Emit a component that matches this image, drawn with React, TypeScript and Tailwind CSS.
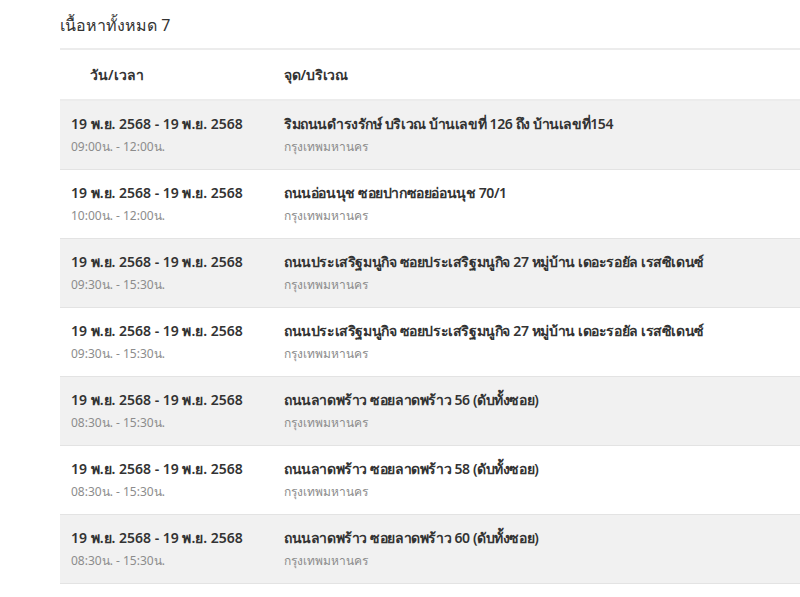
const rows = [
  {
    date: '19 พ.ย. 2568 - 19 พ.ย. 2568',
    time: '09:00น. - 12:00น.',
    place: 'ริมถนนดำรงรักษ์ บริเวณ บ้านเลขที่ 126 ถึง บ้านเลขที่154',
  },
  {
    date: '19 พ.ย. 2568 - 19 พ.ย. 2568',
    time: '10:00น. - 12:00น.',
    place: 'ถนนอ่อนนุช ซอยปากซอยอ่อนนุช 70/1',
  },
  {
    date: '19 พ.ย. 2568 - 19 พ.ย. 2568',
    time: '09:30น. - 15:30น.',
    place: 'ถนนประเสริฐมนูกิจ ซอยประเสริฐมนูกิจ 27 หมู่บ้าน เดอะรอยัล เรสซิเดนซ์',
  },
  {
    date: '19 พ.ย. 2568 - 19 พ.ย. 2568',
    time: '09:30น. - 15:30น.',
    place: 'ถนนประเสริฐมนูกิจ ซอยประเสริฐมนูกิจ 27 หมู่บ้าน เดอะรอยัล เรสซิเดนซ์',
  },
  {
    date: '19 พ.ย. 2568 - 19 พ.ย. 2568',
    time: '08:30น. - 15:30น.',
    place: 'ถนนลาดพร้าว ซอยลาดพร้าว 56 (ดับทั้งซอย)',
  },
  {
    date: '19 พ.ย. 2568 - 19 พ.ย. 2568',
    time: '08:30น. - 15:30น.',
    place: 'ถนนลาดพร้าว ซอยลาดพร้าว 58 (ดับทั้งซอย)',
  },
  {
    date: '19 พ.ย. 2568 - 19 พ.ย. 2568',
    time: '08:30น. - 15:30น.',
    place: 'ถนนลาดพร้าว ซอยลาดพร้าว 60 (ดับทั้งซอย)',
  },
];

export default function App() {
  return (
    <div className="min-h-[597px] bg-white pl-[60px] font-['Noto_Sans',sans-serif] text-[#333]">
      <h2 className="h-[48px] pt-[12px] text-[16px] leading-[26px] text-[#333]">เนื้อหาทั้งหมด 7</h2>
      <div className="border-t-2 border-[#ececec]">
        <div className="flex h-[51px] items-center border-b-2 border-[#ececec] text-[14px] font-semibold">
          <div className="w-[224px] pl-[30px]">วัน/เวลา</div>
          <div className="tracking-[-0.2px]">จุด/บริเวณ</div>
        </div>
        {rows.map((r, i) => (
          <div
            key={i}
            className={`flex h-[69px] border-b border-[#e3e3e3] pt-[12px] ${i % 2 === 0 ? 'bg-[#f1f1f1]' : 'bg-white'}`}
          >
            <div className="w-[224px] pl-[11px]">
              <div className="text-[14px] font-semibold leading-[22px] text-[#333]">{r.date}</div>
              <div className="text-[12px] leading-[24px] text-[#8c8c8c]">{r.time}</div>
            </div>
            <div className="whitespace-nowrap">
              <div className="text-[14px] font-semibold leading-[22px] tracking-[-0.4px] text-[#333]">{r.place}</div>
              <div className="text-[12px] leading-[24px] text-[#8c8c8c]">กรุงเทพมหานคร</div>
            </div>
          </div>
        ))}
      </div>
    </div>
  );
}
